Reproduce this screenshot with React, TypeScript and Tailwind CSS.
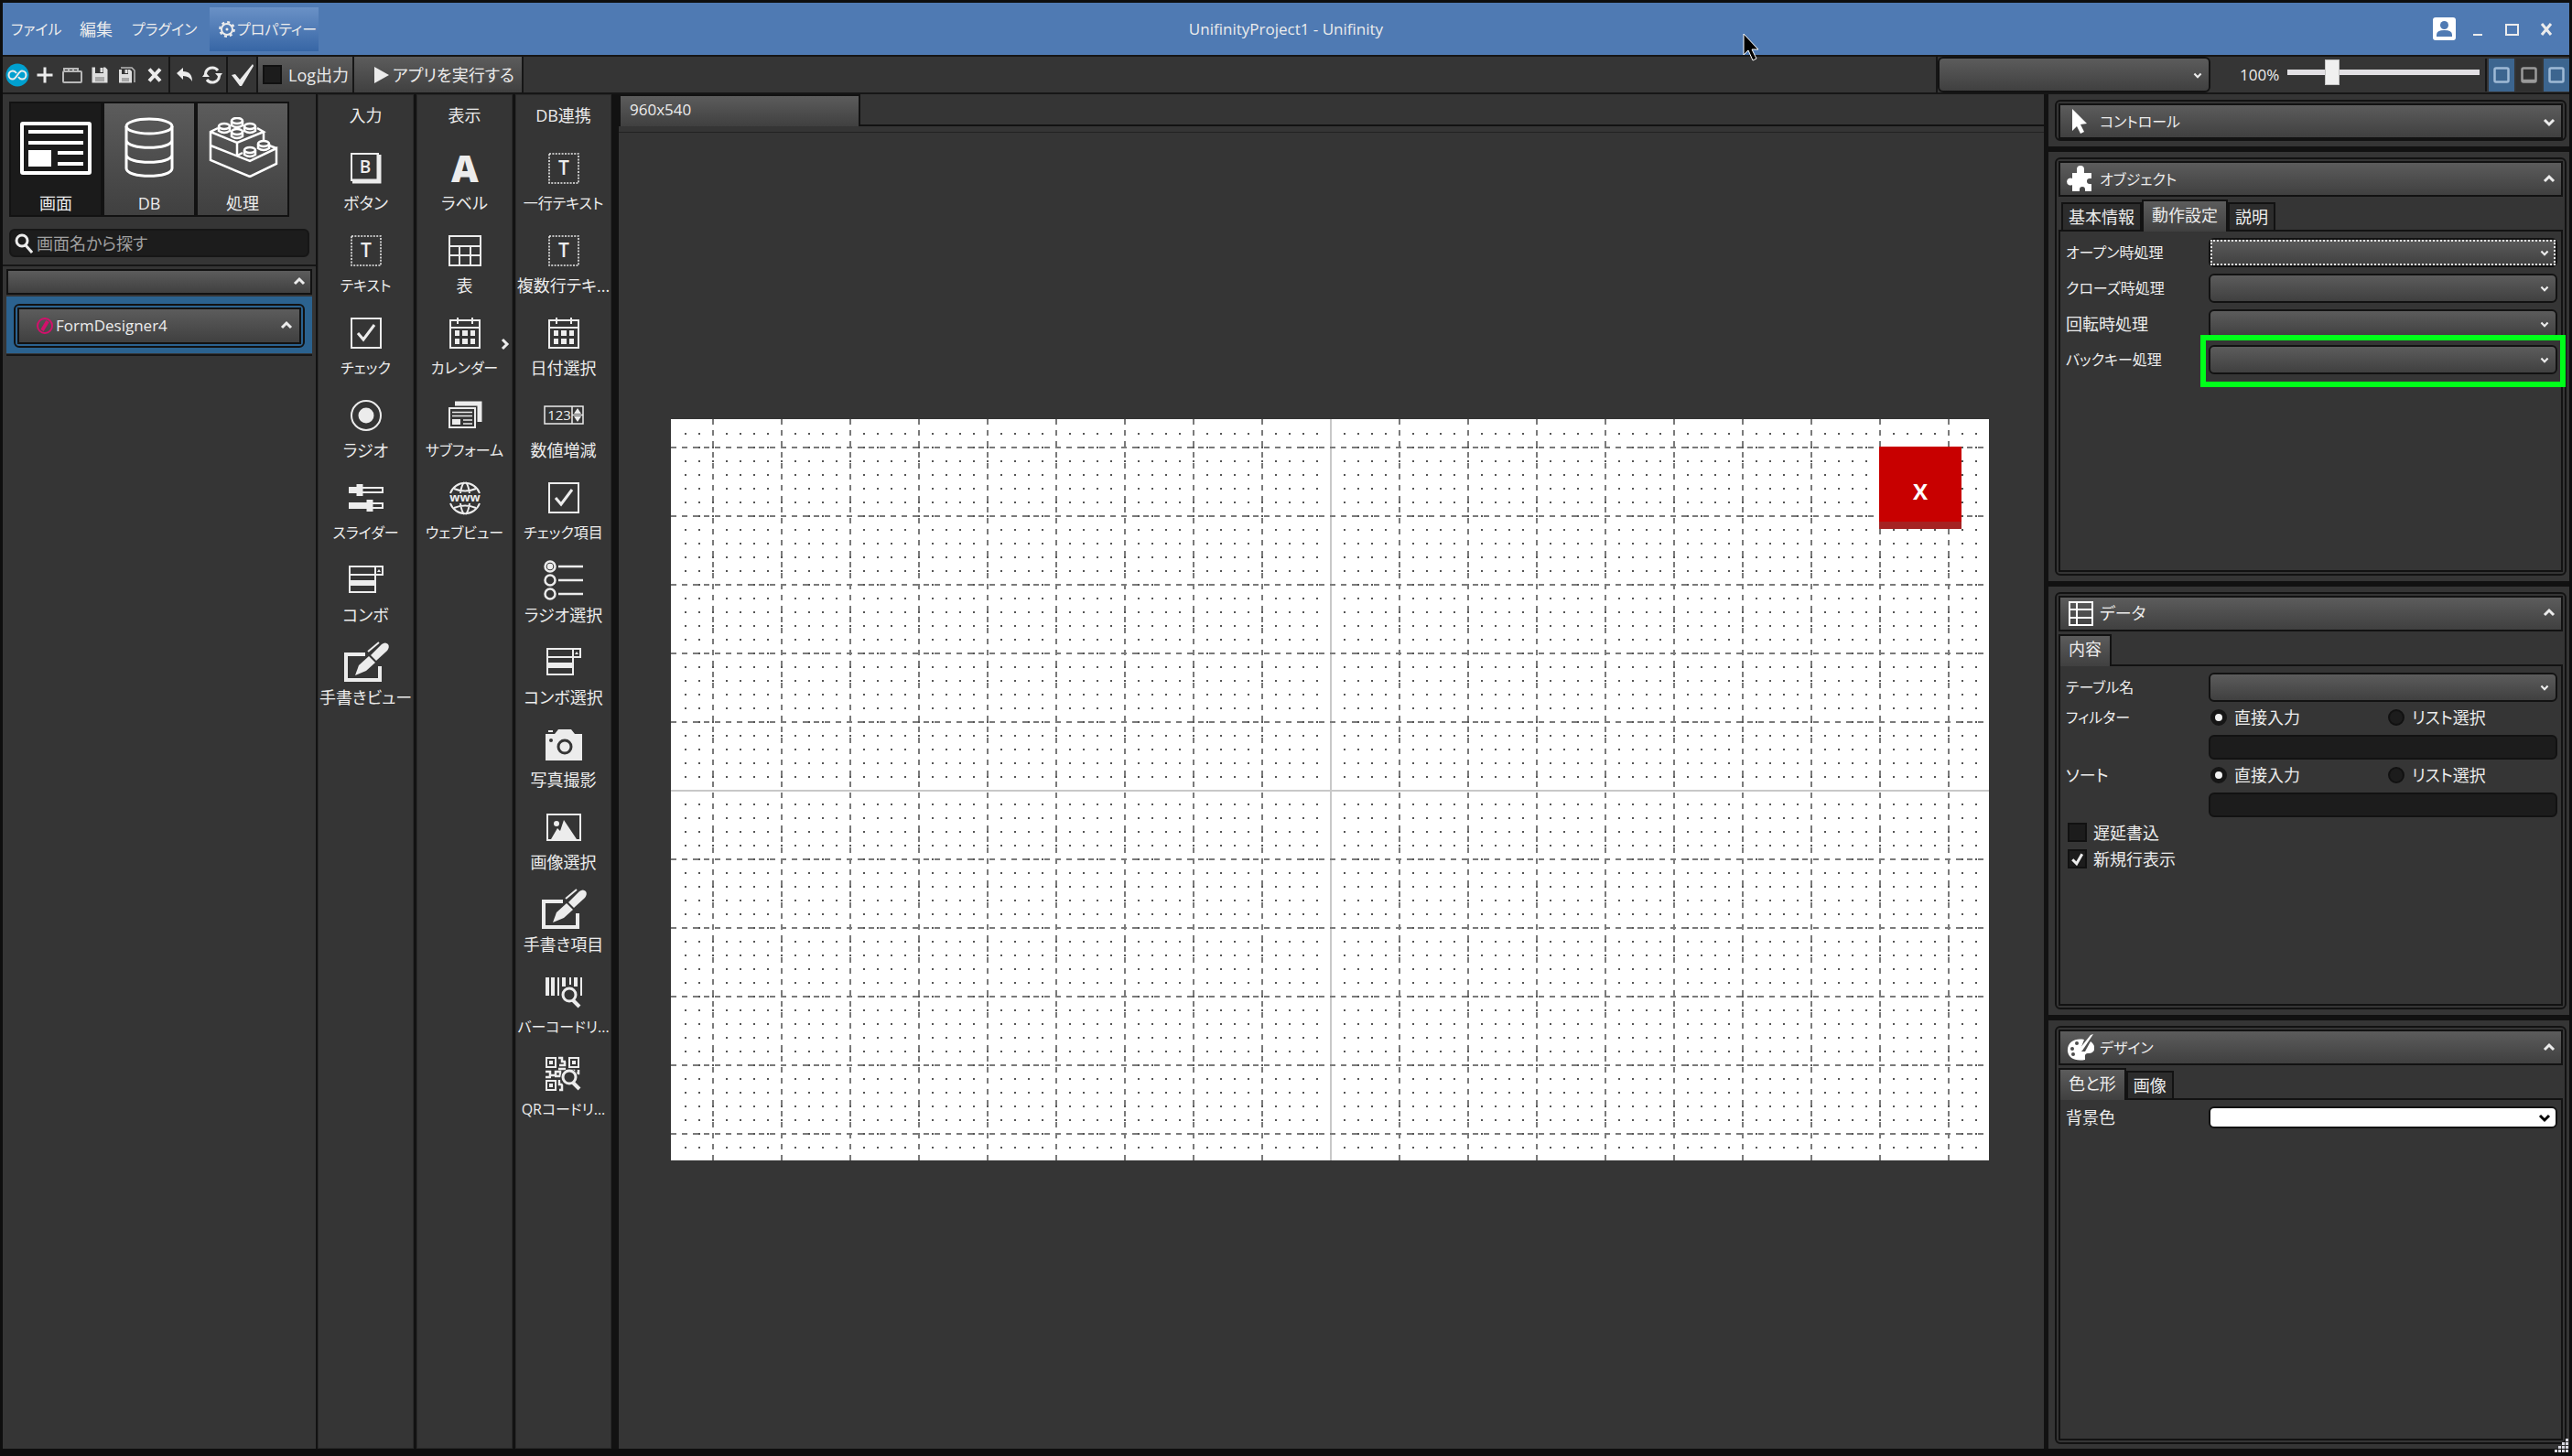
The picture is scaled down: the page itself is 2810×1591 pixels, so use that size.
import React from 'react';
import type { ReactNode } from 'react';
import { clsx } from 'clsx';

const BEVEL = 'bg-linear-to-b from-[#5c5c5c] to-[#404040]';

/** Long katakana runs are set a step smaller so they fit the narrow columns. */
function labelSize(label: string) {
  return /[ァ-ヶー]{4,}/.test(label) ? 'text-[16px]' : 'text-[18px]';
}

/* ── Small shared glyphs ── */

function Chevron({ dir = 'down', className }: { dir?: 'up' | 'down' | 'right'; className?: string }) {
  const d = {
    up: 'M2 9 L7 4 L12 9',
    down: 'M2 5 L7 10 L12 5',
    right: 'M4 2 L9 7 L4 12',
  }[dir];
  return (
    <svg viewBox="0 0 14 14" className={clsx('shrink-0', className)} fill="none" stroke="currentColor" strokeWidth="3" aria-hidden="true">
      <path d={d} />
    </svg>
  );
}

function Tick({ className }: { className?: string }) {
  return (
    <svg viewBox="0 0 20 20" className={className} fill="none" stroke="currentColor" strokeWidth="4" aria-hidden="true">
      <path d="M3 11 L9 17 L17 3" />
    </svg>
  );
}

/* ── Palette icons, all drawn in a 52x44 box ── */

const iconText = { fill: 'currentColor', stroke: 'none', textAnchor: 'middle' as const };

const ComboIcon = (
  <g strokeWidth="2">
    <rect x="8" y="7" width="28" height="28" />
    <path d="M8 16 H44 V7 H36 M36 7 V16" />
    <rect x="8" y="22" width="28" height="6" fill="currentColor" stroke="none" />
    <path d="M38 13 L40 10 L42 13 Z" fill="currentColor" stroke="none" />
  </g>
);

const PenIcon = (
  <g>
    <path d="M25 13 H4 V41 H41 V26" strokeWidth="4" />
    <path d="M14 36 L18 25 L29 15 L36 22 L26 31 Z" fill="currentColor" stroke="none" />
    <path d="M31 14 L43 2 Q47 -1 50 2 Q52 5 49 9 L37 20 Z" fill="currentColor" stroke="none" />
    <path d="M28 10 L40 0" strokeWidth="2" />
  </g>
);

const TextIcon = (
  <g>
    <rect x="10" y="6" width="32" height="32" strokeWidth="1.6" strokeDasharray="2 1.4" />
    <text {...iconText} x="26" y="29" fontSize="21" fontWeight="600">T</text>
  </g>
);

const CheckIcon = (
  <g>
    <rect x="10" y="6" width="32" height="32" strokeWidth="2" />
    <path d="M17 22 L23 29 L35 13" strokeWidth="3" />
  </g>
);

const CalendarIcon = (
  <g strokeWidth="2">
    <rect x="10" y="8" width="32" height="30" />
    <path d="M10 16 H42 M18 5 V12 M34 5 V12" />
    <path d="M15 22 h5 m3 0 h6 m3 0 h5 M15 31 h5 m3 0 h6 m3 0 h5" strokeWidth="6" />
  </g>
);

const MagnifierIcon = (
  <g>
    <circle cx="32" cy="26" r="10" fill="#353535" stroke="none" />
    <circle cx="32" cy="25" r="7" strokeWidth="3" />
    <path d="M36 31 L43 38" strokeWidth="4" />
  </g>
);

const ICONS: Record<string, ReactNode> = {
  button: (
    <g>
      <rect x="10" y="6" width="29" height="29" strokeWidth="2" />
      <path d="M40 7 V36 H11" strokeWidth="5" />
      <text {...iconText} x="25" y="27" fontSize="19" fontWeight="600">B</text>
    </g>
  ),
  text: TextIcon,
  check: CheckIcon,
  radio: (
    <g>
      <circle cx="26" cy="22" r="16" strokeWidth="2" />
      <circle cx="26" cy="22" r="8.5" fill="currentColor" stroke="none" />
    </g>
  ),
  slider: (
    <g>
      <rect x="8" y="11" width="36" height="5" strokeWidth="2" />
      <rect x="8" y="28" width="36" height="5" strokeWidth="2" />
      <path d="M7 13.5 H20 M7 30.5 H30" strokeWidth="6" />
      <path d="M19 7 V20 M30 24 V37" strokeWidth="7" />
    </g>
  ),
  combo: ComboIcon,
  pen: PenIcon,
  label: <text {...iconText} x="26" y="37" fontSize="41" fontWeight="800">A</text>,
  table: (
    <g strokeWidth="2">
      <rect x="9" y="6" width="34" height="32" />
      <path d="M9 17 H43 M9 27 H43 M20 17 V38 M32 17 V38" />
    </g>
  ),
  calendar: CalendarIcon,
  subform: (
    <g strokeWidth="2">
      <path d="M15 9 H42 V29" strokeWidth="5" />
      <rect x="9" y="14" width="28" height="21" />
      <path d="M12 18.5 H34 M12 22.5 H34 M24 27 H34 M24 31 H34" strokeWidth="1.5" />
      <rect x="12" y="26" width="9" height="6" fill="currentColor" stroke="none" />
    </g>
  ),
  web: (
    <g strokeWidth="2">
      <path d="M10 17 A17 17 0 0 1 42 17 M10 28 A17 17 0 0 0 42 28" />
      <path d="M14 12 Q26 17 38 12 M14 33 Q26 28 38 33 M21 17 Q22 9 25 5 M31 17 Q30 9 27 5 M21 28 Q22 36 25 40 M31 28 Q30 36 27 40" />
      <text {...iconText} x="26" y="26" fontSize="13" fontWeight="700">www</text>
    </g>
  ),
  number: (
    <g strokeWidth="1.5">
      <rect x="5" y="12" width="42" height="19" />
      <path d="M35 12 V31 M35 21.5 H47" />
      <text {...iconText} x="21" y="27" fontSize="15">123</text>
      <path d="M37 20 L41 14 L45 20 Z M37 23 L41 29 L45 23 Z" fill="currentColor" stroke="none" />
    </g>
  ),
  radiolist: (
    <g strokeWidth="2.5">
      <circle cx="11" cy="7" r="5.5" />
      <circle cx="11" cy="7" r="2" fill="currentColor" />
      <circle cx="11" cy="22" r="5.5" />
      <circle cx="11" cy="37" r="5.5" />
      <path d="M20 7 H47 M20 22 H47 M20 37 H47" />
    </g>
  ),
  camera: (
    <g>
      <path d="M6 10 H16 L20 5 H34 L38 10 H46 V39 H6 Z" fill="currentColor" stroke="none" />
      <path d="M9 7 H14" strokeWidth="2" />
      <circle cx="27" cy="24" r="7" stroke="#353535" strokeWidth="3" />
      <circle cx="12" cy="17" r="2" fill="#353535" stroke="none" />
    </g>
  ),
  image: (
    <g strokeWidth="2">
      <rect x="8" y="8" width="36" height="28" />
      <path d="M12 35 L19 23 L22 26 L26 14 L40 35 Z" fill="currentColor" stroke="none" />
      <circle cx="18" cy="18" r="3" fill="currentColor" stroke="none" />
    </g>
  ),
  barcode: (
    <g>
      <path d="M8 6 V26 M14 6 V26" strokeWidth="4" />
      <path d="M20 6 V26 M33 6 V14 M45 6 V26" strokeWidth="2" />
      <path d="M26 6 V16 M39 6 V16" strokeWidth="4" />
      {MagnifierIcon}
    </g>
  ),
  qr: (
    <g>
      <path d="M7 4 h10 v10 h-10 Z M32 4 h10 v10 h-10 Z M7 29 h10 v10 h-10 Z" strokeWidth="2" />
      <path d="M10 9 h4 M35 9 h4 M10 34 h4" strokeWidth="4" />
      <path d="M20 4 h4 v4 h4 M21 12 h6 v-4 M6 19 h5 v4 h6 v-4 h5 v5 h-6 M20 16 h8 M31 18 h6 v3 h5 v-4 M21 28 v5 h3 v6 h-3 M6 25 h6" strokeWidth="2.5" />
      {MagnifierIcon}
    </g>
  ),
};

const PALETTES = [
  {
    title: '入力',
    items: [
      ['button', 'ボタン'],
      ['text', 'テキスト'],
      ['check', 'チェック'],
      ['radio', 'ラジオ'],
      ['slider', 'スライダー'],
      ['combo', 'コンボ'],
      ['pen', '手書きビュー'],
    ],
  },
  {
    title: '表示',
    items: [
      ['label', 'ラベル'],
      ['table', '表'],
      ['calendar', 'カレンダー'],
      ['subform', 'サブフォーム'],
      ['web', 'ウェブビュー'],
    ],
  },
  {
    title: 'DB連携',
    items: [
      ['text', '一行テキスト'],
      ['text', '複数行テキ...'],
      ['calendar', '日付選択'],
      ['number', '数値増減'],
      ['check', 'チェック項目'],
      ['radiolist', 'ラジオ選択'],
      ['combo', 'コンボ選択'],
      ['camera', '写真撮影'],
      ['image', '画像選択'],
      ['pen', '手書き項目'],
      ['barcode', 'バーコードリ...'],
      ['qr', 'QRコードリ...'],
    ],
  },
];

function Palette({ title, items }: { title: string; items: string[][] }) {
  return (
    <section className="w-[105px] shrink-0 border border-[#2a2a2a] bg-[#353535]">
      <h2 className="h-[58px] pt-[10px] text-center leading-6">{title}</h2>
      {items.map(([icon, label]) => (
        <button key={label} type="button" className="relative flex h-[90px] w-full flex-col items-center">
          <svg viewBox="0 0 52 44" className="h-11 w-[52px] shrink-0 overflow-visible" fill="none" stroke="currentColor" aria-hidden="true">
            {ICONS[icon]}
          </svg>
          <span className={clsx('mt-1 leading-6 whitespace-nowrap', labelSize(label))}>{label}</span>
          {icon === 'calendar' && title === '表示' && <Chevron dir="right" className="absolute top-[27px] right-0 size-[14px]" />}
        </button>
      ))}
    </section>
  );
}

/* ── Title bar ── */

function TitleBar() {
  return (
    <header className="grid h-[57px] grid-cols-[1fr_auto_1fr] items-center bg-[#4f7ab3]">
      <nav className="flex items-center pl-[9px]">
        <button type="button" className="w-[75px] text-left text-[16px]">ファイル</button>
        <button type="button" className="w-[57px] text-left">編集</button>
        <button type="button" className="w-[85px] text-left text-[16px]">プラグイン</button>
        <button type="button" className="flex h-12 w-[119px] items-center gap-[2px] bg-linear-to-b from-[#6a91c6] to-[#3766a5] pl-[10px] text-[16px] whitespace-nowrap">
          <svg viewBox="0 0 18 18" className="size-[18px] shrink-0" fill="none" stroke="currentColor" aria-hidden="true">
            <circle cx="9" cy="9" r="6" strokeWidth="2" />
            <circle cx="9" cy="9" r="7.8" strokeWidth="2.2" strokeDasharray="3 3.12" />
            <circle cx="9" cy="9" r="1.5" fill="currentColor" stroke="none" />
          </svg>
          プロパティー
        </button>
      </nav>
      <h1 className="text-[17px]">UnifinityProject1 - Unifinity</h1>
      <div className="flex items-center justify-end pr-[18px]">
        <button type="button" aria-label="アカウント">
          <svg viewBox="0 0 25 25" className="size-[25px]" aria-hidden="true">
            <rect width="25" height="25" rx="3" fill="#fff" />
            <circle cx="12.5" cy="8.5" r="4.5" fill="#4f7ab3" />
            <path d="M4 21 V19 Q4 14 12.5 14 Q21 14 21 19 V21 Z" fill="#4f7ab3" />
          </svg>
        </button>
        <button type="button" aria-label="最小化" className="ml-[19px]">
          <svg viewBox="0 0 10 14" className="h-[14px] w-[10px]" aria-hidden="true">
            <rect y="12" width="10" height="2" fill="currentColor" />
          </svg>
        </button>
        <button type="button" aria-label="最大化" className="ml-[25px]">
          <svg viewBox="0 0 15 14" className="h-[14px] w-[15px]" fill="none" stroke="currentColor" strokeWidth="2" aria-hidden="true">
            <rect x="1" y="2" width="13" height="11" />
          </svg>
        </button>
        <button type="button" aria-label="閉じる" className="ml-[23px]">
          <svg viewBox="0 0 14 14" className="size-[14px]" stroke="currentColor" strokeWidth="3" aria-hidden="true">
            <path d="M2 1 L12 13 M12 1 L2 13" />
          </svg>
        </button>
      </div>
    </header>
  );
}

/* ── Toolbar ── */

const TOOL_GROUPS: { name: string; art: ReactNode }[][] = [
  [
    {
      name: 'ホーム',
      art: (
        <g>
          <circle cx="14" cy="14" r="12.5" fill="#00a0d0" stroke="none" />
          <path d="M19 9.500 C15 9.500 13 18.500 9 18.500 A4.500 4.500 0 0 1 9 9.500 C11 9.500 12 10.500 13 12 M15 16 C16 17.500 17 18.500 19 18.500 A4.500 4.500 0 0 0 19 9.500" strokeWidth="2" />
        </g>
      ),
    },
    { name: '新規', art: <path d="M14 5.500 V22.500 M5.500 14 H22.500" strokeWidth="3" /> },
    {
      name: '開く',
      art: (
        <g stroke="#b9b9b9" strokeWidth="2">
          <rect x="4" y="10" width="20" height="12" rx="1" />
          <path d="M5 9 V7 H20 V10 M10 7 V10 M15 7 V10" />
        </g>
      ),
    },
    {
      name: '保存',
      art: (
        <g stroke="none" fill="#dedede">
          <path d="M5.500 5.500 H9 V12 H18 V5.500 H20 L22.500 8 V22.500 H5.500 Z" />
          <rect x="14.500" y="6" width="3" height="5" />
          <rect x="9" y="16" width="10" height="5" fill="#a8a8a8" />
        </g>
      ),
    },
    {
      name: 'すべて保存',
      art: (
        <g stroke="none" fill="#dedede">
          <path d="M5 8 H8 V13 H15 V8 H17 L19 10 V22.500 H5 Z" />
          <rect x="11.500" y="8" width="3" height="4" />
          <rect x="8" y="17" width="8" height="4" fill="#a8a8a8" />
          <path d="M7 6 H19 L22 9 V22" fill="none" stroke="#b9b9b9" strokeWidth="1.500" />
        </g>
      ),
    },
    { name: '削除', art: <path d="M8 7.500 L20 20.500 M20 7.500 L8 20.500" strokeWidth="4" /> },
  ],
  [
    { name: '元に戻す', art: <path d="M5 12 L12 6 V10 Q22 10 22 21 Q19 15 12 15 V19 Z" fill="currentColor" stroke="none" /> },
    {
      name: '更新',
      art: (
        <g strokeWidth="3">
          <path d="M6.500 13 A7.500 7.500 0 0 1 20 9 M21.500 15 A7.500 7.500 0 0 1 8 19" />
          <path d="M17 12 H25 L21.500 17 Z M3 16 H11 L6.500 11 Z" fill="currentColor" stroke="none" />
        </g>
      ),
    },
  ],
  [{ name: '検証', art: <path d="M2 14 L6 13 L11 19 L25 2 L26 4 L13 26 H11 Z" fill="currentColor" stroke="none" /> }],
];

function CheckBox({ id, label, checked = false }: { id: string; label: string; checked?: boolean }) {
  return (
    <label htmlFor={id} className="flex items-center gap-[7px] whitespace-nowrap">
      <span className="relative size-[21px] shrink-0">
        <input id={id} type="checkbox" defaultChecked={checked} className="peer block size-full appearance-none border-2 border-[#111] bg-[#1c1c1c]" />
        <Tick className="pointer-events-none absolute inset-0 hidden size-full p-[3px] peer-checked:block" />
      </span>
      {label}
    </label>
  );
}

function PaneToggle({ name, on }: { name: string; on: boolean }) {
  return (
    <button type="button" aria-label={name} aria-pressed={on} className={clsx('grid h-9 w-7 place-items-center', on ? 'bg-[#3c658f]' : 'bg-[#303030]')}>
      <svg viewBox="0 0 18 18" className="size-[18px]" fill="none" stroke={on ? '#9fbad6' : '#9a9a9a'} strokeWidth="2.500" aria-hidden="true">
        <rect x="1.500" y="1.500" width="15" height="15" rx="1.500" />
        {!on && <path d="M2 15 H16" />}
      </svg>
    </button>
  );
}

function Toolbar() {
  return (
    <div className="flex h-[43px] items-stretch gap-[2px] border-y-2 border-[#161616] bg-[#161616]">
      {TOOL_GROUPS.map((group) => (
        <div key={group[0].name} className="flex items-center bg-[#353535] pl-px">
          {group.map(({ name, art }) => (
            <button key={name} type="button" aria-label={name} className="grid w-[30px] place-items-center">
              <svg viewBox="0 0 28 28" className="size-7" fill="none" stroke="currentColor" aria-hidden="true">
                {art}
              </svg>
            </button>
          ))}
        </div>
      ))}
      <div className={clsx('flex w-[103px] items-center pl-[5px]', BEVEL)}>
        <CheckBox id="log-output" label="Log出力" />
      </div>
      <button type="button" className={clsx('flex w-[183px] items-center gap-1 pl-[22px] whitespace-nowrap', BEVEL)}>
        <svg viewBox="0 0 16 18" className="h-[18px] w-4 shrink-0" fill="currentColor" aria-hidden="true">
          <path d="M0 0 L16 9 L0 18 Z" />
        </svg>
        アプリを実行する
      </button>
      <div className="flex-1 bg-[#353535]" />
      <div className="flex w-[690px] items-center bg-[#353535]">
        <ComboBox id="screen-jump" label="画面の選択" className="h-[39px] w-[298px]" />
        <label htmlFor="zoom" className="w-[84px] pl-8 text-[17px]">100%</label>
        <input
          id="zoom"
          type="range"
          defaultValue={21}
          className="mb-[6px] h-7 w-[210px] appearance-none bg-transparent [&::-webkit-slider-runnable-track]:h-[6px] [&::-webkit-slider-runnable-track]:bg-[#e2e0e4] [&::-webkit-slider-thumb]:-mt-[11px] [&::-webkit-slider-thumb]:h-7 [&::-webkit-slider-thumb]:w-4 [&::-webkit-slider-thumb]:appearance-none [&::-webkit-slider-thumb]:border [&::-webkit-slider-thumb]:border-[#c4c4c4] [&::-webkit-slider-thumb]:bg-[#f0f0f0]"
        />
        <div className="ml-auto flex items-center gap-[2px] border-l-2 border-[#161616] pl-[2px]">
          <PaneToggle name="左パネル" on />
          <PaneToggle name="下パネル" on={false} />
          <PaneToggle name="右パネル" on />
        </div>
      </div>
    </div>
  );
}

/* ── Left sidebar ── */

const MODES = [
  {
    label: '画面',
    active: true,
    art: (
      <g strokeWidth="4">
        <rect x="2" y="7" width="74" height="54" rx="1" />
        <path d="M9 16 H69 M9 28 H69 M41 39 H69 M41 51 H69" />
        <rect x="9" y="36" width="25" height="18" fill="currentColor" stroke="none" />
      </g>
    ),
  },
  {
    label: 'DB',
    active: false,
    art: (
      <g strokeWidth="3">
        <ellipse cx="39" cy="10" rx="25" ry="8" />
        <path d="M14 10 V56 C14 67 64 67 64 56 V10 M14 25 C14 36 64 36 64 25 M14 41 C14 52 64 52 64 41" />
      </g>
    ),
  },
  {
    label: '処理',
    active: false,
    art: (
      <g strokeWidth="2.5">
        <path d="M12 12 L4 16 V47 L47 65 L76 51 V34 L47 48 L4 31 M4 16 L33 28 L62 16 L55 12 M33 28 V42 M62 16 V25 M68 31 L76 34 M33 42 L39 39" />
        {[
          [33, 4],
          [19, 10],
          [47, 10],
          [33, 16],
          [62, 29],
          [47, 36],
        ].map(([x, y]) => (
          <g key={`${x}-${y}`}>
            <path d={`M${x - 6} ${y} V${y + 5} Q${x} ${y + 9} ${x + 6} ${y + 5} V${y}`} />
            <ellipse cx={x} cy={y} rx="6" ry="3" />
          </g>
        ))}
      </g>
    ),
  },
];

function Sidebar() {
  return (
    <aside className="flex w-[342px] shrink-0 flex-col bg-[#353535]">
      <div className="mt-2 ml-[7px] flex gap-1 self-start bg-[#121212] p-[2px]">
        {MODES.map(({ label, active, art }) => (
          <button key={label} type="button" className={clsx('flex h-[122px] w-[98px] flex-col items-center pt-[15px]', active ? 'bg-[#1b1b1b]' : BEVEL)}>
            <svg viewBox="0 0 78 66" className="h-[66px] w-[78px] text-white" fill="none" stroke="currentColor" aria-hidden="true">
              {art}
            </svg>
            <span className="mt-4 leading-6">{label}</span>
          </button>
        ))}
      </div>

      <label className="mx-[7px] mt-[13px] flex h-[31px] items-center gap-1 rounded-md border-2 border-[#161616] bg-[#1c1c1c] px-1">
        <svg viewBox="0 0 20 22" className="h-[22px] w-5 shrink-0" fill="none" stroke="currentColor" strokeWidth="3" aria-hidden="true">
          <circle cx="8" cy="8" r="6" />
          <path d="M12 13 L19 21" />
        </svg>
        <input type="search" aria-label="画面名から探す" placeholder="画面名から探す" className="min-w-0 flex-1 bg-transparent outline-none placeholder:text-[#a0a0a0]" />
      </label>

      <div className="mt-2 border-t-2 border-[#161616] px-1 pt-[3px]">
        <button type="button" aria-label="グループを閉じる" className={clsx('flex h-7 w-full items-center justify-end border-2 border-[#121212] pr-[5px]', BEVEL)}>
          <Chevron dir="up" className="size-[14px]" />
        </button>
        <div className="mt-[2px] bg-[#2b628f] px-2 pt-2 pb-[6px]">
          <div className="rounded-md border-2 border-[#121212] p-[2px]">
            <button type="button" className={clsx('flex h-10 w-full items-center border-2 border-[#121212] pr-[7px] pl-[19px]', BEVEL)}>
              <svg viewBox="0 0 18 18" className="size-[18px]" fill="none" stroke="#d3106c" aria-hidden="true">
                <circle cx="9" cy="9" r="8" strokeWidth="2" />
                <path d="M6 14 L12 4" strokeWidth="4" />
              </svg>
              <span className="ml-[3px] text-[17px]">FormDesigner4</span>
              <Chevron dir="up" className="ml-auto size-[14px]" />
            </button>
          </div>
        </div>
        <div className="h-[3px] border-b-2 border-[#161616]" />
      </div>
    </aside>
  );
}

/* ── Form canvas ── */

const COLUMNS = Array.from({ length: 19 }, (_, i) => 45 + i * 75);
const ROWS = Array.from({ length: 11 }, (_, i) => 30 + i * 75);

function FormCanvas() {
  return (
    <div className="relative h-[810px] w-[1440px] bg-white">
      <svg viewBox="0 0 1440 810" className="size-full" fill="none" stroke="#7a7a7a" strokeWidth="2" aria-hidden="true">
        <defs>
          <pattern id="dots" width="15" height="15" patternUnits="userSpaceOnUse">
            <rect x="0" y="0" width="2" height="2" fill="#555" stroke="none" />
          </pattern>
        </defs>
        <rect x="10" y="10" width="1430" height="800" fill="url(#dots)" stroke="none" />
        {COLUMNS.map((x) => (
          <path key={x} d={`M${x + 1} 0 V810`} strokeDasharray={x === 720 ? undefined : '6 6'} stroke={x === 720 ? '#c8c8c8' : undefined} />
        ))}
        {ROWS.map((y) => (
          <path key={y} d={`M0 ${y + 1} H1440`} strokeDasharray={y === 405 ? undefined : '6 6'} stroke={y === 405 ? '#c8c8c8' : undefined} />
        ))}
      </svg>
      <button type="button" className="absolute top-[30px] left-[1320px] size-[90px] border-b-8 border-[#a52222] bg-[#c80000] pt-4 text-2xl font-bold text-white">
        X
      </button>
    </div>
  );
}

function Workspace() {
  return (
    <main className="flex min-w-0 flex-1 flex-col bg-[#353535]">
      <div className="flex h-[35px] items-stretch">
        <div className={clsx('w-[264px] border-2 border-b-0 border-[#121212] pl-[10px] text-[17px] leading-[29px]', BEVEL)}>960x540</div>
        <div className="flex-1 border-b-2 border-[#121212]" />
      </div>
      <div className="h-[7px] border-b border-[#222]" />
      <div className="flex flex-1 items-center justify-center pr-[3px] pb-[2px]">
        <FormCanvas />
      </div>
    </main>
  );
}

/* ── Right inspector ── */

function ComboBox({ id, label, focused = false, className }: { id: string; label?: string; focused?: boolean; className?: string }) {
  return (
    <div className={clsx('relative rounded-md border-2 border-[#121212]', BEVEL, className)}>
      <select id={id} aria-label={label} className={clsx('block size-full appearance-none bg-transparent outline-none', focused && 'border-2 border-dotted border-[#e6e6e6]')} />
      <Chevron className="pointer-events-none absolute inset-y-0 right-[7px] my-auto size-[10px]" />
    </div>
  );
}

const HEAD_ICONS: Record<string, ReactNode> = {
  pointer: <path d="M6 1 V25 L11 20 L15 28 L19 26 L15 18 L22 17 Z" />,
  puzzle: <path d="M6 8 H11 V4 A4 4 0 0 1 19 4 V8 H27 V14 H25 A3 3 0 0 0 25 20 H27 V28 H20 V26 A3 3 0 0 0 14 26 V28 H6 V21 A4 4 0 1 1 6 14 Z" />,
  grid: (
    <g fill="none" stroke="currentColor" strokeWidth="2">
      <rect x="3" y="2" width="25" height="25" />
      <path d="M3 10 H28 M3 19 H28 M11 2 V27" />
    </g>
  ),
  palette: (
    <g>
      <path d="M1 19 C0 9 9 4 19 6 L14 19 L20 19 L26 8 C33 13 31 21 24 21 C19 21 20 24 20 28 C9 30 2 26 1 19 Z" />
      <path d="M29 0 L17 18 L13 21 L14 16 L26 1 Z" />
      <circle cx="6" cy="16" r="2" fill="#4c4c4c" />
      <circle cx="11" cy="10" r="2" fill="#4c4c4c" />
      <circle cx="7" cy="22" r="2" fill="#4c4c4c" />
    </g>
  ),
};

interface PanelProps {
  icon: string;
  title: string;
  tabs?: string[];
  active?: string;
  children?: ReactNode;
}

function Panel({ icon, title, tabs, active, children }: PanelProps) {
  return (
    <section
      className={clsx(
        'mr-[3px] ml-[7px] flex flex-col rounded-md border-2 border-[#121212] px-[2px] pt-[2px]',
        tabs ? 'flex-1 pb-[2px]' : 'shrink-0',
      )}
    >
      <button type="button" className={clsx('flex h-[39px] w-full shrink-0 items-center border-2 border-[#121212] pr-[6px] pl-[7px] text-left', BEVEL)}>
        <svg viewBox="0 0 30 29" className="h-[29px] w-[30px] shrink-0 text-white" fill="currentColor" aria-hidden="true">
          {HEAD_ICONS[icon]}
        </svg>
        <span className={clsx('ml-[6px]', labelSize(title))}>{title}</span>
        <Chevron dir={tabs ? 'up' : 'down'} className="ml-auto size-[14px]" />
      </button>
      {tabs && (
        <>
          <div role="tablist" className={clsx('mt-[3px] flex h-[33px] shrink-0 items-end', tabs[0] !== active && 'pl-[3px]')}>
            {tabs.map((tab) => (
              <button
                key={tab}
                type="button"
                role="tab"
                aria-selected={tab === active}
                className={clsx(
                  'border-2 border-b-0 border-[#121212] leading-[26px] whitespace-nowrap',
                  tab === active ? clsx('relative -mb-[2px] h-[35px] px-[9px] pb-1', BEVEL) : 'h-[30px] bg-[#2c2c2c] px-[6px]',
                )}
              >
                {tab}
              </button>
            ))}
          </div>
          <div className="flex-1 border-2 border-[#121212] pr-1 pl-[6px]">{children}</div>
        </>
      )}
    </section>
  );
}

function Field({ id, label, focused, marked }: { id: string; label: string; focused?: boolean; marked?: boolean }) {
  return (
    <div className="flex h-8 items-center">
      <label htmlFor={id} className={clsx('w-[156px] shrink-0', labelSize(label))}>{label}</label>
      <div className="relative flex-1">
        <ComboBox id={id} focused={focused} className="h-8" />
        {marked && <div className="pointer-events-none absolute -inset-x-[9px] -top-[11px] -bottom-[14px] border-[6px] border-[#00ff1a]" />}
      </div>
    </div>
  );
}

function SourceField({ name, label }: { name: string; label: string }) {
  return (
    <div role="group" aria-label={label} className="grid grid-cols-[156px_minmax(0,1fr)] gap-y-[7px]">
      <span className={clsx('leading-6', labelSize(label))}>{label}</span>
      <div className="grid h-6 grid-cols-[194px_minmax(0,1fr)] items-center">
        {['直接入力', 'リスト選択'].map((option, i) => (
          <label key={option} className="flex items-center gap-2 pl-[2px] whitespace-nowrap">
            <input
              type="radio"
              name={name}
              defaultChecked={i === 0}
              className="size-[18px] appearance-none rounded-full border-2 border-[#111] bg-[#1c1c1c] checked:border-[5px] checked:border-[#161616] checked:bg-[#f2f2f2]"
            />
            {option}
          </label>
        ))}
      </div>
      <input type="text" aria-label={label} className="col-start-2 h-[27px] min-w-0 rounded-md border-2 border-[#121212] bg-[#1c1c1c] px-2 outline-none" />
    </div>
  );
}

function Divider() {
  return <div className="my-[6px] h-[6px] shrink-0 bg-[#111]" />;
}

function Inspector() {
  return (
    <aside className="flex w-[569px] shrink-0 flex-col bg-[#353535] pt-[6px] pb-[5px]">
      <Panel icon="pointer" title="コントロール" />
      <Divider />
      <Panel icon="puzzle" title="オブジェクト" tabs={['基本情報', '動作設定', '説明']} active="動作設定">
        <div className="flex flex-col gap-[7px] pt-[7px]">
          <Field id="on-open" label="オープン時処理" focused />
          <Field id="on-close" label="クローズ時処理" />
          <Field id="on-rotate" label="回転時処理" />
          <Field id="on-back" label="バックキー処理" marked />
        </div>
      </Panel>
      <Divider />
      <Panel icon="grid" title="データ" tabs={['内容']} active="内容">
        <div className="flex flex-col gap-[5px] pt-[7px]">
          <Field id="table-name" label="テーブル名" />
          <SourceField name="filter" label="フィルター" />
          <SourceField name="sort" label="ソート" />
          <div className="flex flex-col gap-[5px] pl-[2px]">
            <CheckBox id="lazy-write" label="遅延書込" />
            <CheckBox id="show-new-row" label="新規行表示" checked />
          </div>
        </div>
      </Panel>
      <Divider />
      <Panel icon="palette" title="デザイン" tabs={['色と形', '画像']} active="色と形">
        <div className="flex items-center pt-[7px]">
          <label htmlFor="bg-color" className="w-[156px] leading-6">背景色</label>
          <div className="relative flex-1">
            <select id="bg-color" className="block h-6 w-full appearance-none rounded-md border-2 border-[#121212] bg-white outline-none" />
            <Chevron className="pointer-events-none absolute inset-y-0 right-[7px] my-auto size-[14px] text-black" />
          </div>
        </div>
      </Panel>
    </aside>
  );
}

/** Dotted corner handle of the window frame. */
function ResizeGrip() {
  const dots = [0, 1, 2, 3].flatMap((row) => Array.from({ length: row + 1 }, (_, i) => [12 - i * 4, row * 4]));
  return (
    <svg viewBox="0 0 16 16" className="pointer-events-none absolute right-0 -bottom-[5px] size-4" fill="#d8d8e0" aria-hidden="true">
      {dots.map(([x, y]) => (
        <rect key={`${x}-${y}`} x={x} y={y} width="3" height="3" />
      ))}
    </svg>
  );
}

export default function App() {
  return (
    <div className="relative flex min-h-screen flex-col border-[3px] border-b-8 border-[#0e0e0e] bg-[#121212] font-['Open_Sans','Noto_Sans_CJK_JP',sans-serif] text-[18px] leading-6 text-[#ececec] [font-feature-settings:'palt']">
      <TitleBar />
      <Toolbar />
      <div className="flex flex-1 items-stretch">
        <Sidebar />
        <div className="flex gap-[3px] px-[2px]">
          {PALETTES.map((palette) => (
            <Palette key={palette.title} {...palette} />
          ))}
        </div>
        <div className="w-[6px] shrink-0" />
        <Workspace />
        <div className="w-[5px] shrink-0" />
        <Inspector />
      </div>
      <ResizeGrip />
      <svg viewBox="0 0 18 31" className="pointer-events-none absolute top-[33px] left-[1901px] h-[31px] w-[18px]" fill="#000" stroke="#fff" strokeWidth="1" aria-hidden="true">
        <path d="M1 1 V24 L6 19 L11 30 L15 28 L10 18 H17 Z" />
      </svg>
    </div>
  );
}
